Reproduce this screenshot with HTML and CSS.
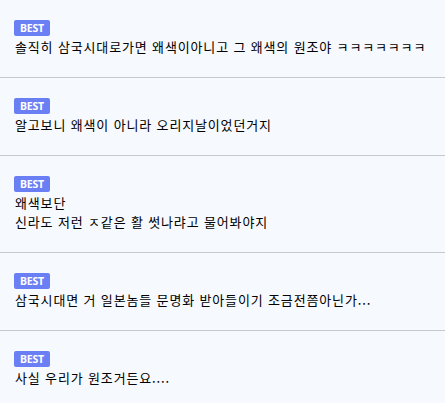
FILE: index.html
```html
<!DOCTYPE html>
<html lang="ko">
<head>
<meta charset="utf-8">
<link rel="stylesheet" href="styles.css">
</head>
<body>
<ul class="list">
  <li class="item">
    <span class="badge">BEST</span>
    <p class="text">솔직히 삼국시대로가면 왜색이아니고 그 왜색의 원조야 ㅋㅋㅋㅋㅋㅋㅋ</p>
  </li>
  <li class="item">
    <span class="badge">BEST</span>
    <p class="text">알고보니 왜색이 아니라 오리지날이었던거지</p>
  </li>
  <li class="item">
    <span class="badge">BEST</span>
    <p class="text">왜색보단<br>신라도 저런 ㅈ같은 활 썻나랴고 물어봐야지</p>
  </li>
  <li class="item">
    <span class="badge">BEST</span>
    <p class="text">삼국시대면 거 일본놈들 문명화 받아들이기 조금전쯤아닌가...</p>
  </li>
  <li class="item">
    <span class="badge">BEST</span>
    <p class="text">사실 우리가 원조거든요....</p>
  </li>
</ul>
</body>
</html>
```
FILE: styles.css
```css
html, body {
  margin: 0;
  padding: 0;
  background: #f6f9fe;
}
body {
  font-family: "Noto Sans CJK KR", "Noto Sans", sans-serif;
  font-size: 13px;
  color: #000;
}
.list {
  list-style: none;
  margin: 0;
  padding: 0;
}
.item {
  display: flex;
  flex-direction: column;
  align-items: flex-start;
  padding: 20px 14px 21px;
  border-bottom: 1px solid #c8c9cc;
}
.badge {
  display: flex;
  align-items: center;
  justify-content: center;
  width: 36px;
  height: 16px;
  box-sizing: border-box;
  border-radius: 2px;
  background: #6b7ff4;
  color: #fff;
  font-family: "Noto Sans", sans-serif;
  font-weight: 700;
  font-size: 10.5px;
  letter-spacing: -0.2px;
  line-height: 16px;
}
.text {
  margin: 0;
  padding: 1px 0 0 1px;
  line-height: 19px;
  letter-spacing: 0.85px;
}
```
